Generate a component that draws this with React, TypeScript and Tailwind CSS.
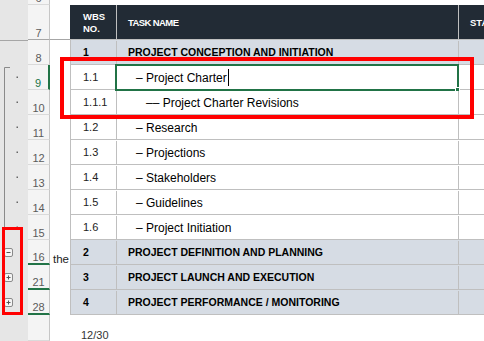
import React from "react";

type Row = {
  n: string;
  wbs: string;
  task: string;
  level: number;
  selected?: boolean;
  mark?: boolean;
  colA?: string;
};

const rows: Row[] = [
  { n: "8", wbs: "1", task: "PROJECT CONCEPTION AND INITIATION", level: 0 },
  { n: "9", wbs: "1.1", task: "– Project Charter", level: 1, selected: true },
  { n: "10", wbs: "1.1.1", task: "–– Project Charter Revisions", level: 2 },
  { n: "11", wbs: "1.2", task: "– Research", level: 1 },
  { n: "12", wbs: "1.3", task: "– Projections", level: 1 },
  { n: "13", wbs: "1.4", task: "– Stakeholders", level: 1 },
  { n: "14", wbs: "1.5", task: "– Guidelines", level: 1 },
  { n: "15", wbs: "1.6", task: "– Project Initiation", level: 1 },
  { n: "16", wbs: "2", task: "PROJECT DEFINITION AND PLANNING", level: 0, mark: true, colA: "the" },
  { n: "21", wbs: "3", task: "PROJECT LAUNCH AND EXECUTION", level: 0, mark: true },
  { n: "28", wbs: "4", task: "PROJECT PERFORMANCE / MONITORING", level: 0, mark: true },
];

function OutlineGutter() {
  const dots = [77, 102, 127, 152, 177, 202, 227];
  const boxes = [
    { y: 248, plus: false },
    { y: 273, plus: true },
    { y: 298, plus: true },
  ];
  return (
    <svg width="28" height="341" className="shrink-0 block">
      <rect x="0" y="0" width="28" height="341" fill="#e6e6e6" />
      <line x1="0" y1="40.5" x2="28" y2="40.5" stroke="#a6a6a6" />
      <path d="M10 67.5H4.5V246" fill="none" stroke="#8a8a8a" />
      {dots.map((y) => (
        <rect key={y} x="16.5" y={y - 0.5} width="1.5" height="1.5" fill="#666" />
      ))}
      {boxes.map((b) => (
        <g key={b.y}>
          <rect x="4.5" y={b.y + 0.5} width="8" height="8" rx="1.5" fill="#f4f4f4" stroke="#8a8a8a" />
          <line x1="6.5" y1={b.y + 4.5} x2="10.5" y2={b.y + 4.5} stroke="#555" />
          {b.plus && <line x1="8.5" y1={b.y + 2.5} x2="8.5" y2={b.y + 6.5} stroke="#555" />}
        </g>
      ))}
    </svg>
  );
}

function RowHeader({ n, active, mark, freeze }: { n?: string; active?: boolean; mark?: boolean; freeze?: boolean }) {
  return (
    <div
      className={`w-[22px] shrink-0 bg-[#f4f4f4] flex items-end justify-center text-[11px] leading-none ${
        active ? "border-r-2 border-[#217346] text-[#217346]" : "border-r border-[#c6c6c6] text-[#5b5b5b]"
      } ${mark ? "border-b-2 border-b-[#217346]" : freeze ? "border-b border-b-[#a6a6a6]" : "border-b border-b-[#dadada]"}`}
    >
      {n}
    </div>
  );
}

export default function App() {
  return (
    <div className="relative w-[484px] h-[341px] overflow-hidden bg-white flex font-['Liberation_Sans',Arial,sans-serif] text-black">
      <OutlineGutter />

      <div className="flex-1 flex flex-col min-w-0">
        {/* row 6, mostly scrolled off */}
        <div className="flex h-[5px] overflow-hidden">
          <RowHeader n="6" />
          <div className="flex-1" />
        </div>

        {/* row 7 - table header */}
        <div className="flex h-[35px]">
          <RowHeader n="7" freeze />
          <div className="w-[20px] shrink-0 border-b border-[#a6a6a6]" />
          <div className="flex flex-1 bg-[#222b35] text-white font-bold border-b border-[#bfbfbf]">
            <div className="w-[47px] shrink-0 border-r border-[#bfbfbf] pl-[13px] pt-px flex flex-col justify-center text-[9.5px] leading-[12px]">
              <span>WBS</span>
              <span>NO.</span>
            </div>
            <div className="w-[342px] shrink-0 border-r border-[#bfbfbf] pl-[11px] pt-[2px] flex items-center text-[9.5px] tracking-[-0.6px]">
              TASK NAME
            </div>
            <div className="flex-1 pl-[11px] pt-[2px] flex items-center text-[9.5px] whitespace-nowrap">STATUS</div>
          </div>
        </div>

        {rows.map((r) => {
          const top = r.level === 0;
          return (
            <div key={r.n} className="flex h-[25px]">
              <RowHeader n={r.n} active={r.selected} mark={r.mark} />
              <div className="w-[20px] shrink-0 flex items-end pl-[3px] text-[11.5px] leading-none text-[#222] whitespace-nowrap overflow-visible">
                {r.colA}
              </div>
              <div
                className={`flex flex-1 border-l border-b border-[#bfbfbf] pt-px ${top ? "bg-[#d6dce4] font-bold text-[10.5px]" : "bg-white text-[12px]"}`}
              >
                <div
                  className={`w-[46px] shrink-0 border-r border-[#bfbfbf] pl-[12px] flex items-center ${top ? "" : "text-[11px] text-[#222]"}`}
                >
                  {r.wbs}
                </div>
                <div
                  className={`relative w-[342px] shrink-0 border-r border-[#bfbfbf] flex items-center whitespace-nowrap ${
                    r.level === 0 ? "pl-[11px]" : r.level === 1 ? "pl-[19px]" : "pl-[29px]"
                  }`}
                >
                  {r.task}
                  {r.selected && (
                    <>
                      <span className="inline-block w-px h-[17px] bg-black ml-px" />
                      <div className="absolute -left-[2px] -top-[2px] -right-px -bottom-[2px] border-2 border-[#217346]" />
                      <div className="absolute -right-[2px] -bottom-[3px] w-[5px] h-[5px] bg-[#217346] border border-white" />
                    </>
                  )}
                </div>
                <div className="flex-1" />
              </div>
            </div>
          );
        })}

        {/* empty row below table */}
        <div className="flex flex-1">
          <RowHeader />
          <div className="w-[20px] shrink-0" />
          <div className="flex-1 flex items-end pl-[11px] text-[11px] text-[#333] leading-none">12/30</div>
        </div>
      </div>

      {/* red annotation boxes */}
      <div className="absolute left-[2px] top-[227px] w-[21px] h-[88px] border-[3px] border-[#ff0000]" />
      <div className="absolute left-[60px] top-[57px] w-[414px] h-[62px] border-4 border-[#ff0000]" />
    </div>
  );
}
